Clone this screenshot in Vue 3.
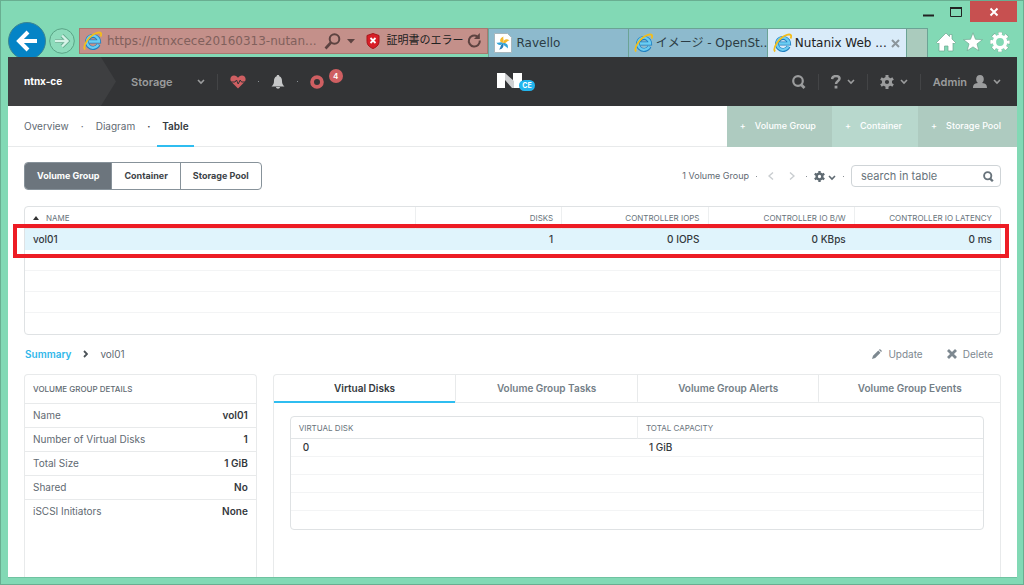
<template>
  <div class="window">
    <header class="chrome">
      <div class="title-bar">
        <button type="button" class="win-btn" aria-label="Minimize">
          <svg width="12" height="12" viewBox="0 0 12 12"><path d="M0 9.500h11" stroke="#222" stroke-width="2" /></svg>
        </button>
        <button type="button" class="win-btn" aria-label="Maximize">
          <svg width="14" height="12" viewBox="0 0 14 12"><path d="M1.500 1.500h11v9h-11z" fill="none" stroke="#222" /><path d="M1 2h12" stroke="#222" stroke-width="2" /></svg>
        </button>
        <button type="button" class="win-btn close" aria-label="Close">
          <svg width="10" height="10" viewBox="0 0 10 10"><path d="M1.500 1.500l7 7M8.500 1.500l-7 7" stroke="#fff" stroke-width="2" /></svg>
        </button>
      </div>

      <div class="nav-bar">
        <button type="button" class="nav-btn" aria-label="Back">
          <svg width="38" height="38" viewBox="0 0 38 38"><circle cx="19" cy="19" r="18.500" fill="#0584c6" stroke="#3c8591" /><path d="M29 19H11M20 10l-9 9 9 9" fill="none" stroke="#fff" stroke-width="4" /></svg>
        </button>
        <button type="button" class="nav-btn" aria-label="Forward">
          <svg width="26" height="26" viewBox="0 0 26 26"><circle cx="13" cy="13" r="12.300" fill="#8edcbc" stroke="#5aa486" /><path d="M6 13h12M13 7.500l5.500 5.500-5.500 5.500" fill="none" stroke="#64aa8d" stroke-width="4" /><path d="M6 13h12M13 7.500l5.500 5.500-5.500 5.500" fill="none" stroke="#d5f3e7" stroke-width="2.400" /></svg>
        </button>

        <div class="address">
          <svg width="19" height="20" viewBox="0 0 19 20"><path d="M15.500 13.500A6 6 0 1 1 16 10.500H6" fill="none" stroke="#1f7fc0" stroke-width="4" /><path d="M15.300 13.500A6 6 0 1 1 16 10.500H6" fill="none" stroke="#6bcdf2" stroke-width="2.400" /><path d="M2.200 18.500C-1 16 6 4 14 1.800c4-1 5 .8 3.500 3.700" fill="none" stroke="#f3bd1c" stroke-width="1.800" /></svg>
          <input v-model="url" type="text" aria-label="Address" />
          <svg width="17" height="17" viewBox="0 0 17 17"><circle cx="10.500" cy="6" r="4.800" fill="none" stroke="#5d4341" stroke-width="2" /><path d="M7 9.500L1.500 15.500" stroke="#5d4341" stroke-width="2.600" /></svg>
          <svg class="caret" width="8" height="5" viewBox="0 0 8 5"><path d="M0 0h8L4 4.500z" fill="#5d4341" /></svg>
          <svg width="14" height="16" viewBox="0 0 14 16"><path d="M7 .5l6 2v6c0 3.500-3 6-6 7-3-1-6-3.500-6-7v-6z" fill="#d81e26" stroke="#a81419" /><path d="M4.500 5l5 5M9.500 5l-5 5" stroke="#fff" stroke-width="1.800" /></svg>
          <span class="cert">証明書のエラー</span>
          <svg width="15" height="16" viewBox="0 0 15 16"><path d="M12.800 7.500a5.500 5.500 0 1 1-2.600-4.200" fill="none" stroke="#5d4341" stroke-width="2" /><path d="M12.800 0v6H7z" fill="#5d4341" /></svg>
        </div>

        <div class="browser-tabs">
          <button
            v-for="tab in browserTabs"
            :key="tab.title"
            type="button"
            class="browser-tab"
            :class="{ current: tab.current }"
          >
            <svg v-if="tab.ie" width="19" height="20" viewBox="0 0 19 20"><path d="M15.500 13.500A6 6 0 1 1 16 10.500H6" fill="none" stroke="#1f7fc0" stroke-width="4" /><path d="M15.300 13.500A6 6 0 1 1 16 10.500H6" fill="none" stroke="#6bcdf2" stroke-width="2.400" /><path d="M2.200 18.500C-1 16 6 4 14 1.800c4-1 5 .8 3.500 3.700" fill="none" stroke="#f3bd1c" stroke-width="1.800" /></svg>
            <svg v-else width="19" height="20" viewBox="0 0 19 20"><path d="M.5.500h13l4 4v15H.5z" fill="#fff" stroke="#a8b7bd" /><path d="M8.500 10C5 9 5.500 5 9.500 3.500 8.500 6 11 7.500 8.500 10z" fill="#f4b92d" /><path d="M9 10c.5-4 4-5 6.500-2.500C13 7.500 12.500 11 9 10z" fill="#f4b92d" /><path d="M9 10c3.500-.5 6 2 4.500 5.500C12.500 13 9.500 13.500 9 10z" fill="#35a4d8" /><path d="M9 10c1.500 3.500-.5 6.500-4 6.500C7 15 6 12 9 10z" fill="#287fb8" /><path d="M9 10c-2 3-5.500 2.500-6.500-.5C5 10.500 6.500 8 9 10z" fill="#35a4d8" /></svg>
            <span>{{ tab.title }}</span>
            <svg v-if="tab.current" class="tab-close" width="9" height="9" viewBox="0 0 9 9"><path d="M1 1l7 7M8 1L1 8" stroke="#8b959c" stroke-width="2" /></svg>
          </button>
          <button type="button" class="new-tab" aria-label="New tab"></button>
        </div>

        <div class="tools">
          <button type="button" aria-label="Home">
            <svg width="20" height="20" viewBox="0 0 20 20"><path d="M10 1l3.500 3.500V2.500H16V7l3.500 3.500-1.500 1.500-1-1v8h-5v-5H8.500v5H3v-8l-1 1-1.500-1.500z" fill="#fff" stroke="#6fa890" stroke-width=".7" /></svg>
          </button>
          <button type="button" aria-label="Favorites">
            <svg width="20" height="20" viewBox="0 0 20 20"><path d="M10 .8l2.500 6.500 7 .3-5.500 4.300 1.900 6.900L10 14.900l-5.900 3.900L6 11.900.5 7.600l7-.3z" fill="#fff" stroke="#6fa890" stroke-width=".7" /></svg>
          </button>
          <button type="button" aria-label="Tools">
            <svg width="20" height="20" viewBox="0 0 20 20"><circle cx="10" cy="10" r="8" fill="none" stroke="#6fa890" stroke-width="4.400" stroke-dasharray="3.900 2.380" stroke-dashoffset="1.950" /><circle cx="10" cy="10" r="8" fill="none" stroke="#fff" stroke-width="3.400" stroke-dasharray="3.500 2.780" stroke-dashoffset="1.750" /><circle cx="10" cy="10" r="5.600" fill="none" stroke="#fff" stroke-width="3.400" /></svg>
          </button>
        </div>
      </div>
    </header>

    <div class="app">
      <header class="app-header">
        <div class="header-left">
          <a href="#" class="cluster">ntnx-ce</a>
          <button type="button" class="menu storage">
            Storage
            <svg width="8" height="6" viewBox="0 0 8 6"><path d="M1 1l3 3 3-3" fill="none" stroke="currentColor" stroke-width="1.600" /></svg>
          </button>
          <span class="divider"></span>
          <button type="button" class="status" aria-label="Health">
            <svg width="16" height="14" viewBox="0 0 16 14"><path d="M8 13.500L1.500 7C-1 4 1 .5 4 .5c2 0 3.200 1 4 2.300C8.800 1.500 10 .5 12 .5c3 0 5 3.500 2.500 6.500z" fill="#cf5f62" /><path d="M1 7h4l1.500-2 1.700 4 2-4 1.300 2H15" fill="none" stroke="#333436" /></svg>
          </button>
          <span class="dot"></span>
          <button type="button" class="status" aria-label="Alerts">
            <svg width="14" height="14" viewBox="0 0 14 14"><path d="M7 0c1 0 1.300.6 1.300 1.200C10.500 2 11 4 11 6c0 3 1 4 2.500 5.500H.5C2 10 3 9 3 6c0-2 .5-4 2.700-4.800C5.700.6 6 0 7 0zM5 12h4c0 2.200-4 2.200-4 0z" fill="#c6c7c8" /></svg>
          </button>
          <span class="dot"></span>
          <button type="button" class="status" aria-label="Tasks">
            <svg width="14" height="14" viewBox="0 0 14 14"><circle cx="7" cy="7" r="4.900" fill="none" stroke="#cf5f62" stroke-width="3.800" /></svg>
            <span class="badge">4</span>
          </button>
        </div>

        <svg class="logo" width="40" height="20" viewBox="0 0 40 20" role="img" aria-label="Nutanix CE"><path d="M0 1h8v15H0zM16 1h9v15h-9z" fill="#fff" /><path d="M8 1l9 8v7h-2L8 8z" fill="#cfd0d2" /><rect x="22" y="8" width="16" height="11" rx="5.500" fill="#22b5ee" /><text x="30" y="16" text-anchor="middle" class="logo-text">CE</text></svg>

        <div class="header-right">
          <button type="button" class="menu" aria-label="Search">
            <svg width="14" height="14" viewBox="0 0 14 14"><circle cx="6" cy="6" r="4.800" fill="none" stroke="currentColor" stroke-width="2.200" /><path d="M8.500 9l4 4" stroke="currentColor" stroke-width="2.800" /></svg>
          </button>
          <span class="divider"></span>
          <button type="button" class="menu" aria-label="Help">
            <svg width="10" height="14" viewBox="0 0 10 14"><path d="M1 4C1.500 0 8.500.3 8.500 3.800 8.500 6 5 6 5 9" fill="none" stroke="currentColor" stroke-width="2.500" /><path d="M3.600 10.700h2.800v2.800H3.600z" fill="currentColor" /></svg>
            <svg width="8" height="6" viewBox="0 0 8 6"><path d="M1 1l3 3 3-3" fill="none" stroke="currentColor" stroke-width="1.600" /></svg>
          </button>
          <span class="divider"></span>
          <button type="button" class="menu" aria-label="Settings">
            <svg width="14" height="14" viewBox="0 0 14 14"><circle cx="7" cy="7" r="3.600" fill="none" stroke="currentColor" stroke-width="3" /><path d="M7 0v3M7 11v3M.9 3.500l2.600 1.500M10.500 9l2.600 1.500M.9 10.500L3.500 9M10.500 5l2.600-1.500" stroke="currentColor" stroke-width="3" /></svg>
            <svg width="8" height="6" viewBox="0 0 8 6"><path d="M1 1l3 3 3-3" fill="none" stroke="currentColor" stroke-width="1.600" /></svg>
          </button>
          <span class="divider"></span>
          <button type="button" class="menu">
            Admin
            <svg width="14" height="14" viewBox="0 0 14 14"><path d="M7 0c5 0 4.500 7 2 8 4 .6 5 2 5 5H0c0-3 1-4.400 5-5C2.500 7 2 0 7 0z" fill="currentColor" /></svg>
            <svg width="8" height="6" viewBox="0 0 8 6"><path d="M1 1l3 3 3-3" fill="none" stroke="currentColor" stroke-width="1.600" /></svg>
          </button>
        </div>
      </header>

      <div class="sub-header">
        <nav class="views">
          <a
            v-for="view in views"
            :key="view"
            href="#"
            :class="{ active: currentView === view }"
            @click.prevent="currentView = view"
            >{{ view }}</a
          >
        </nav>
        <div class="create">
          <button type="button"><span>+</span>Volume Group</button>
          <button type="button"><span>+</span>Container</button>
          <button type="button"><span>+</span>Storage Pool</button>
        </div>
      </div>

      <main class="content">
        <div class="toolbar">
          <div class="segments">
            <button
              v-for="kind in kinds"
              :key="kind"
              type="button"
              :class="{ active: currentKind === kind }"
              @click="currentKind = kind"
            >
              {{ kind }}
            </button>
          </div>
          <div class="pager">
            <span>1 Volume Group</span>
            <span class="dot"></span>
            <button type="button" aria-label="Previous page">
              <svg width="6" height="8" viewBox="0 0 6 8"><path d="M5 .5L1 4l4 3.500" fill="none" stroke="#c9cdd0" stroke-width="1.400" /></svg>
            </button>
            <button type="button" aria-label="Next page">
              <svg width="6" height="8" viewBox="0 0 6 8"><path d="M1 .5L5 4 1 7.500" fill="none" stroke="#c9cdd0" stroke-width="1.400" /></svg>
            </button>
            <span class="dot"></span>
            <button type="button" class="table-settings" aria-label="Table settings">
              <svg width="11" height="11" viewBox="0 0 14 14"><circle cx="7" cy="7" r="3.600" fill="none" stroke="currentColor" stroke-width="3" /><path d="M7 0v3M7 11v3M.9 3.500l2.600 1.500M10.500 9l2.600 1.500M.9 10.500L3.500 9M10.500 5l2.600-1.500" stroke="currentColor" stroke-width="3" /></svg>
              <svg class="low" width="8" height="6" viewBox="0 0 8 6"><path d="M1 1l3 3 3-3" fill="none" stroke="currentColor" stroke-width="1.600" /></svg>
            </button>
            <span class="dot"></span>
            <div class="search">
              <input v-model="search" type="text" placeholder="search in table" aria-label="search in table" />
              <svg width="11" height="11" viewBox="0 0 14 14"><circle cx="6" cy="6" r="4.600" fill="none" stroke="#68737b" stroke-width="2.400" /><path d="M8.500 9l4 4" stroke="#68737b" stroke-width="3" /></svg>
            </div>
          </div>
        </div>

        <div class="group-wrap">
          <table class="group-table">
            <thead>
              <tr>
                <th>
                  <svg width="6" height="4" viewBox="0 0 6 4"><path d="M3 0l3 4H0z" fill="#333" /></svg>NAME
                </th>
                <th>DISKS</th>
                <th>CONTROLLER IOPS</th>
                <th>CONTROLLER IO B/W</th>
                <th>CONTROLLER IO LATENCY</th>
              </tr>
            </thead>
            <tbody>
              <tr class="selected">
                <td>vol01</td>
                <td>1</td>
                <td>0 IOPS</td>
                <td>0 KBps</td>
                <td>0 ms</td>
              </tr>
              <tr v-for="n in 4" :key="n">
                <td colspan="5"></td>
              </tr>
            </tbody>
          </table>
          <div class="highlight"></div>
        </div>

        <div class="crumbs">
          <a href="#">Summary</a>
          <svg width="5" height="8" viewBox="0 0 5 8"><path d="M1 1l3 3-3 3" fill="none" stroke="#4b5257" stroke-width="1.800" /></svg>
          <span>vol01</span>
          <div class="row-actions">
            <button type="button">
              <svg width="10" height="10" viewBox="0 0 10 10"><path d="M0 10l1-3.200L6.300 1.500l2.200 2.200L3.200 9zM7 .9L7.900 0 10 2.100l-.9.900z" fill="#7d8890" /></svg>
              Update
            </button>
            <button type="button">
              <svg width="10" height="10" viewBox="0 0 10 10"><path d="M1 1l8 8M9 1L1 9" stroke="#7d8890" stroke-width="2.800" /></svg>
              Delete
            </button>
          </div>
        </div>

        <div class="panels">
          <section class="details">
            <h2>VOLUME GROUP DETAILS</h2>
            <dl>
              <div v-for="item in details" :key="item.label">
                <dt>{{ item.label }}</dt>
                <dd>{{ item.value }}</dd>
              </div>
            </dl>
          </section>

          <section class="tab-panel">
            <div class="tabs">
              <button
                v-for="tab in tabs"
                :key="tab"
                type="button"
                :class="{ active: currentTab === tab }"
                @click="currentTab = tab"
              >
                {{ tab }}
              </button>
            </div>
            <div class="tab-body">
              <table class="disk-table">
                <thead>
                  <tr>
                    <th>VIRTUAL DISK</th>
                    <th>TOTAL CAPACITY</th>
                  </tr>
                </thead>
                <tbody>
                  <tr>
                    <td>0</td>
                    <td>1 GiB</td>
                  </tr>
                  <tr v-for="n in 4" :key="n">
                    <td colspan="2"></td>
                  </tr>
                </tbody>
              </table>
            </div>
          </section>
        </div>
      </main>
    </div>
  </div>
</template>

<script setup>
import { ref } from 'vue';

const url = ref('https://ntnxcece20160313-nutan...');
const search = ref('');

const browserTabs = [
  { title: 'Ravello' },
  { title: 'イメージ - OpenSt...', ie: true },
  { title: 'Nutanix Web ...', ie: true, current: true },
];

const views = ['Overview', 'Diagram', 'Table'];
const currentView = ref('Table');

const kinds = ['Volume Group', 'Container', 'Storage Pool'];
const currentKind = ref('Volume Group');

const tabs = [
  'Virtual Disks',
  'Volume Group Tasks',
  'Volume Group Alerts',
  'Volume Group Events',
];
const currentTab = ref('Virtual Disks');

const details = [
  { label: 'Name', value: 'vol01' },
  { label: 'Number of Virtual Disks', value: '1' },
  { label: 'Total Size', value: '1 GiB' },
  { label: 'Shared', value: 'No' },
  { label: 'iSCSI Initiators', value: 'None' },
];
</script>

<style>
body {
  margin: 0;
}
</style>

<style scoped>
* {
  box-sizing: border-box;
}

svg {
  display: block;
  flex: none;
}

button {
  padding: 0;
  border: none;
  background: none;
  color: inherit;
  font: inherit;
  white-space: nowrap;
  cursor: pointer;
}

a {
  color: inherit;
  text-decoration: none;
}

.window {
  display: flex;
  flex-direction: column;
  min-height: 100vh;
  padding: 0 6px 6px 7px;
  border: 1px solid #69ae91;
  background: #82d9b5;
  font-family: Inter, 'Noto Sans CJK JP', sans-serif;
  font-size: 10px;
  line-height: 16px;
  color: #5f6a72;
}

/* browser chrome */
.chrome {
  height: 56px;
  overflow: hidden;
  font-family: 'DejaVu Sans', 'Noto Sans CJK JP', sans-serif;
  font-size: 12px;
}

.title-bar {
  display: flex;
  justify-content: flex-end;
  height: 21px;
}

.win-btn {
  display: flex;
  align-items: center;
  justify-content: center;
  width: 27px;
}

.win-btn.close {
  width: 47px;
  margin-left: 1px;
  background: #c75050;
}

.nav-bar {
  display: flex;
  align-items: flex-start;
}

.nav-btn {
  margin-right: 3px;
}

.nav-btn + .nav-btn {
  margin-top: 6px;
  margin-right: 4px;
}

.address {
  display: flex;
  align-items: center;
  flex: 399 1 0;
  min-width: 0;
  height: 26px;
  margin-top: 6px;
  padding: 0 5px 0 3px;
  border: 1px solid #a9786f;
  background: #c4908a;
}

.address input {
  flex: 1;
  min-width: 0;
  margin-left: 5px;
  padding: 0;
  border: none;
  outline: none;
  background: none;
  color: #81605c;
  font: inherit;
}

.caret {
  margin: 0 11px 0 6px;
}

.cert {
  margin: 0 4px 0 6px;
  color: #222;
  font-size: 11px;
  white-space: nowrap;
}

.browser-tabs {
  display: flex;
  flex: 439 1 0;
  min-width: 0;
  height: 29px;
  margin-top: 6px;
}

.browser-tab {
  display: flex;
  align-items: center;
  flex: 1;
  min-width: 0;
  gap: 3px;
  padding-left: 5px;
  border: 1px solid #6ba395;
  border-width: 1px 0 0 1px;
  background: #8dbacd;
  color: #2c3c44;
}

.browser-tab.current {
  background: #d9ebf9;
  color: #222;
}

.tab-close {
  margin-left: auto;
  margin-right: 6px;
}

.new-tab {
  width: 22px;
  border: 1px solid #6ba395;
  border-bottom: none;
  background: #aacbbd;
}

.tools {
  display: flex;
  gap: 7px;
  margin: 10px 7px 0 8px;
}

/* prism */
.app {
  display: flex;
  flex: 1;
  flex-direction: column;
  border-bottom: 1px solid #6fc3a1;
  background: #fff;
}

.app-header {
  display: grid;
  grid-template-columns: 1fr auto 1fr;
  align-items: center;
  height: 49px;
  background: #333436;
  color: #9b9c9d;
  font-weight: 600;
}

.header-left,
.header-right {
  display: flex;
  align-items: center;
}

.header-right {
  justify-content: flex-end;
  gap: 12px;
  padding-right: 16px;
}

.cluster {
  width: 108px;
  padding-left: 16px;
  background: #3e3f41;
  clip-path: polygon(0 0, 86% 0, 100% 50%, 86% 100%, 0 100%);
  color: #fff;
  font-weight: 700;
  line-height: 49px;
}

.menu {
  display: flex;
  align-items: center;
  gap: 6px;
  font-size: 11px;
}

.storage {
  gap: 24px;
  margin: 0 12px 0 15px;
}

.divider {
  width: 1px;
  height: 16px;
  background: #434446;
}

.status {
  display: flex;
  margin: 0 12px;
}

.dot {
  width: 1px;
  height: 1px;
  background: #8b9196;
}

.badge {
  width: 14px;
  height: 14px;
  margin: -6px 0 6px 5px;
  border-radius: 50%;
  background: #cf5f62;
  color: #fff;
  font-size: 8px;
  line-height: 14px;
}

.logo {
  margin-left: 9px;
}

.logo-text {
  fill: #fff;
  font-size: 7px;
  font-weight: 700;
}

.sub-header {
  display: flex;
  justify-content: space-between;
  height: 41px;
  border-bottom: 1px solid #e8eaeb;
}

.views {
  display: flex;
  padding-left: 11px;
}

.views a {
  position: relative;
  padding: 0 5px;
  border-bottom: 2px solid transparent;
  line-height: 40px;
}

.views a + a {
  margin-left: 17px;
}

.views a + a::before {
  content: '·';
  position: absolute;
  left: -10px;
}

.views a.active {
  height: 41px;
  border-color: #2fbdf0;
  color: #34393d;
  font-weight: 600;
}

.create {
  display: flex;
  height: 41px;
}

.create button {
  padding: 0 16px 2px 13px;
  background: #aecbc0;
  color: #fff;
  font-size: 9px;
  font-weight: 500;
}

.create button:nth-child(2) {
  background: #b8d8cd;
}

.create span {
  margin-right: 9px;
}

.content {
  display: flex;
  flex: 1;
  flex-direction: column;
  padding: 15px 16px 0;
}

.toolbar {
  display: flex;
  align-items: center;
  justify-content: space-between;
}

.segments {
  display: flex;
  height: 28px;
  border: 1px solid #87929a;
  border-radius: 4px;
  overflow: hidden;
}

.segments button {
  padding: 0 12px;
  color: #3d4348;
  font-size: 9px;
  font-weight: 700;
}

.segments button + button {
  border-left: 1px solid #87929a;
}

.segments .active {
  background: #6c757d;
  color: #fff;
}

.pager {
  display: flex;
  align-items: center;
  gap: 7px;
  font-size: 9px;
}

.pager > button {
  padding: 0 4px;
}

.pager > .table-settings {
  display: flex;
  align-items: center;
  gap: 3px;
  padding: 0;
}

.low {
  margin-top: 4px;
}

.search {
  display: flex;
  align-items: center;
  width: 150px;
  height: 22px;
  padding: 0 6px 0 9px;
  border: 1px solid #cfd4d7;
  border-radius: 4px;
}

.search input {
  flex: 1;
  min-width: 0;
  padding: 0;
  border: none;
  outline: none;
  background: none;
  font: inherit;
  font-size: 11px;
}

.search input::placeholder {
  color: #68737b;
}

table {
  width: 100%;
  border: 1px solid #dfe2e4;
  border-radius: 4px;
  border-spacing: 0;
  table-layout: fixed;
}

th {
  border-bottom: 1px solid #e2e5e7;
  color: #68737b;
  font-size: 8px;
  font-weight: 400;
}

th + th {
  border-left: 1px solid #edeff0;
}

td {
  border-bottom: 1px solid #f3f4f5;
  color: #33383c;
  font-weight: 500;
}

tr:last-child td {
  border-bottom: none;
}

.group-wrap {
  position: relative;
  margin-top: 16px;
}

.group-table th,
.group-table td {
  height: 21px;
  padding: 0 8px;
  text-align: right;
}

.group-table th {
  height: 22px;
}

.group-table th:first-child,
.group-table td:first-child {
  width: 40%;
  text-align: left;
}

.group-table th svg {
  display: inline-block;
  margin-right: 7px;
  vertical-align: middle;
}

.selected td {
  border-color: #e0f4fc;
  background: #e0f4fc;
}

/* callout around the volume group that was just created */
.highlight {
  position: absolute;
  inset: 18px -8px auto -11px;
  height: 34px;
  border: 4px solid #ed1c24;
}

.crumbs {
  display: flex;
  align-items: center;
  gap: 12px;
  padding: 11px 8px 12px 1px;
}

.crumbs a {
  color: #2fb7ea;
  font-weight: 600;
}

.row-actions {
  display: flex;
  gap: 24px;
  margin-left: auto;
  color: #7d8890;
}

.row-actions button {
  display: flex;
  align-items: center;
  gap: 6px;
}

.panels {
  display: flex;
  flex: 1;
  gap: 16px;
}

.details,
.tab-panel {
  border: 1px solid #e8eaeb;
  border-bottom: none;
  border-radius: 4px 4px 0 0;
}

.details {
  flex: 232 1 0;
}

.details h2 {
  margin: 0;
  padding-left: 8px;
  font-size: 8px;
  font-weight: 500;
  line-height: 28px;
}

.details dl {
  margin: 0;
}

.details dl div {
  display: flex;
  justify-content: space-between;
  padding: 0 8px 1px;
  border-top: 1px solid #e8eaeb;
  line-height: 22px;
}

.details dd {
  margin: 0;
  color: #33383c;
  font-weight: 600;
}

.tab-panel {
  flex: 730 1 0;
}

.tabs {
  display: grid;
  grid-template-columns: repeat(4, 1fr);
  height: 28px;
  border-bottom: 1px solid #e8eaeb;
}

.tabs button {
  height: 28px;
  border-bottom: 2px solid transparent;
  color: #737e86;
  font-weight: 600;
}

.tabs button + button {
  border-left: 1px solid #e8eaeb;
}

.tabs .active {
  border-bottom-color: #2fbdf0;
  color: #34393d;
}

.tab-body {
  padding: 13px 16px;
}

.disk-table th {
  height: 22px;
  padding: 0 8px;
  text-align: left;
}

.disk-table td {
  height: 18px;
  padding: 0 12px;
  line-height: 17px;
}
</style>
